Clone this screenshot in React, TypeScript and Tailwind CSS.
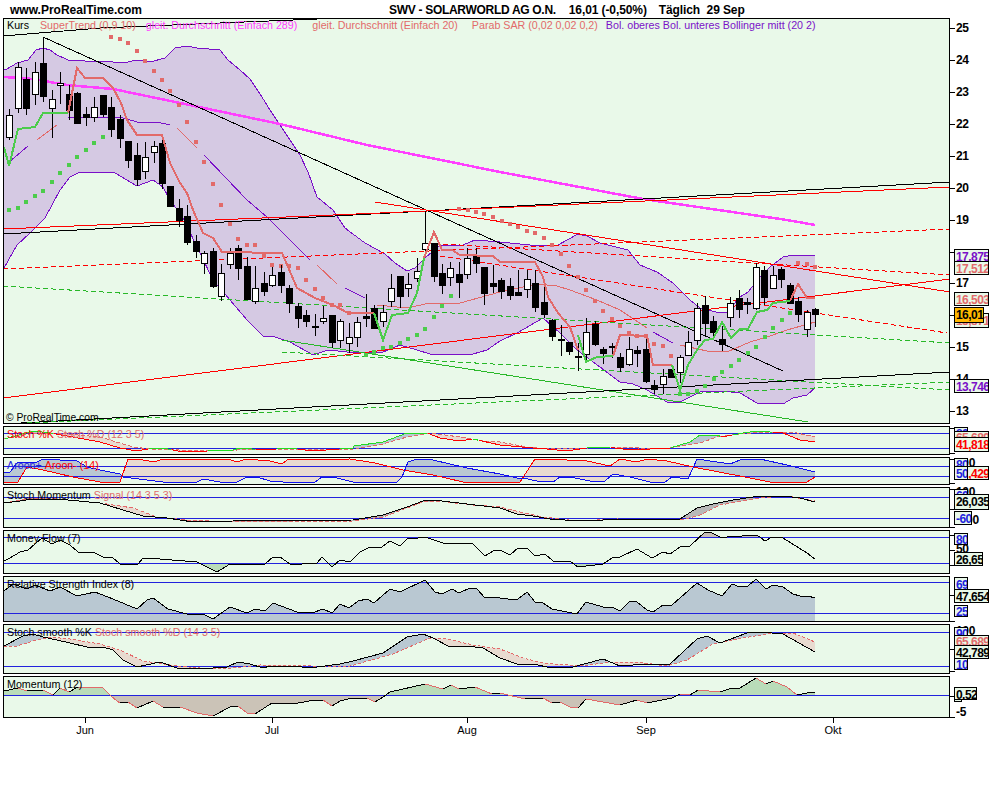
import React from 'react';

type P = [number, number];

const SALMON = '#e26a6a';
const PURPLE = '#7a10c8';
const GREEN = '#4ccc4c';
const BLUE = '#2222dd';
const ABOVE = '#b9c8d2';
const BELOW = '#e8dbd0';

const at = (s: P[], x: number) => {
  for (let i = 1; i < s.length; i++) {
    if (x <= s[i][0]) {
      const [x0, y0] = s[i - 1];
      const [x1, y1] = s[i];
      return x1 === x0 ? y1 : y0 + ((y1 - y0) * (x - x0)) / (x1 - x0);
    }
  }
  return s[s.length - 1][1];
};

// split the x range into runs where a is above b / below b
const runsOf = (a: P[], b: P[]) => {
  const x0 = Math.max(a[0][0], b[0][0]);
  const x1 = Math.min(a[a.length - 1][0], b[b.length - 1][0]);
  const runs: { up: boolean; xs: number[] }[] = [];
  for (let x = x0; x <= x1; x++) {
    const up = at(a, x) < at(b, x);
    if (!runs.length || runs[runs.length - 1].up !== up) runs.push({ up, xs: [] });
    runs[runs.length - 1].xs.push(x);
  }
  return runs;
};

const pts = (s: P[]) => s.map((p) => p.join(',')).join(' ');

const level = (y: number): P[] => [[4, y], [950, y]];

function Between({ a, b, up, down }: { a: P[]; b: P[]; up?: string; down?: string }) {
  return (
    <>
      {runsOf(a, b).map((r, i) => {
        const fill = r.up ? up : down;
        if (!fill) return null;
        const top = r.xs.map((x) => `${x},${at(a, x)}`);
        const bot = [...r.xs].reverse().map((x) => `${x},${at(b, x)}`);
        return <polygon key={i} points={[...top, ...bot].join(' ')} fill={fill} />;
      })}
    </>
  );
}

function Line({ s, c = '#000', w = 1, dash }: { s: P[]; c?: string; w?: number; dash?: string }) {
  return <polyline points={pts(s)} fill="none" stroke={c} strokeWidth={w} strokeDasharray={dash} />;
}

const candles: [number, number, number, number, number][] = [
  [109, 140, 115, 137, 1], [62, 113, 67, 108, 1], [68, 115, 79, 108, 0], [62, 105, 72, 94, 1], [37, 102, 63, 96, 0],
  [90, 138, 99, 108, 1], [72, 104, 83, 85, 1], [85, 120, 94, 110, 0], [92, 123, 93, 123, 0], [107, 126, 114, 117, 0],
  [97, 122, 107, 117, 1], [95, 117, 95, 114, 0], [97, 137, 107, 129, 0], [115, 148, 119, 138, 0], [141, 168, 141, 160, 0],
  [143, 186, 155, 179, 0], [142, 179, 157, 171, 1], [141, 163, 146, 152, 1], [140, 189, 143, 183, 0], [186, 206, 186, 206, 0],
  [199, 227, 208, 220, 0], [205, 245, 216, 242, 0], [235, 258, 241, 251, 0], [251, 274, 253, 263, 1], [248, 288, 251, 286, 0],
  [264, 301, 273, 296, 1], [248, 269, 253, 264, 1], [245, 280, 248, 268, 0], [257, 300, 266, 299, 0], [266, 304, 288, 301, 1],
  [272, 296, 283, 291, 0], [267, 287, 275, 285, 1], [265, 293, 272, 285, 0], [285, 313, 288, 303, 0], [303, 328, 306, 318, 0],
  [310, 327, 315, 321, 0], [314, 336, 326, 327, 0], [306, 324, 318, 321, 1], [315, 348, 315, 342, 0], [319, 348, 321, 340, 1],
  [323, 353, 337, 343, 1], [317, 347, 322, 337, 1], [294, 327, 316, 318, 0], [305, 329, 308, 328, 0], [305, 327, 312, 321, 1],
  [274, 307, 288, 301, 1], [276, 308, 276, 296, 0], [273, 297, 284, 288, 1], [258, 282, 271, 278, 1], [211, 255, 243, 249, 1],
  [243, 282, 243, 276, 0], [264, 294, 273, 285, 0], [262, 286, 268, 277, 1], [262, 298, 274, 282, 0], [248, 279, 258, 274, 1],
  [248, 273, 255, 263, 0], [267, 305, 267, 293, 0], [265, 293, 283, 286, 0], [278, 299, 280, 291, 0], [278, 300, 286, 295, 0],
  [270, 296, 292, 295, 0], [270, 298, 279, 289, 1], [270, 312, 283, 307, 0], [285, 318, 302, 314, 0], [319, 341, 320, 336, 0],
  [325, 356, 339, 339, 0], [342, 355, 342, 351, 0], [343, 371, 356, 357, 0], [318, 360, 332, 354, 1], [321, 346, 324, 344, 0],
  [347, 364, 349, 353, 0], [343, 358, 346, 346, 0], [353, 372, 357, 367, 0], [337, 366, 349, 364, 1], [346, 367, 350, 353, 0],
  [335, 383, 349, 381, 0], [380, 394, 385, 389, 0], [369, 394, 376, 384, 1], [369, 378, 369, 377, 0], [355, 383, 357, 372, 1],
  [331, 356, 342, 355, 1], [303, 345, 308, 340, 1], [296, 337, 305, 323, 0], [316, 338, 321, 332, 0], [326, 351, 339, 344, 0],
  [297, 327, 303, 317, 1], [290, 318, 298, 309, 0], [298, 314, 302, 304, 0], [263, 310, 267, 308, 1], [266, 305, 270, 297, 0],
  [266, 289, 275, 288, 1], [267, 288, 269, 279, 0], [283, 303, 285, 303, 0], [297, 322, 301, 314, 0], [310, 337, 312, 329, 1],
  [308, 327, 309, 314, 0],
];

const bandUp: P[] = [[4, 69], [7, 69], [17, 63], [28, 60], [36, 50], [43, 48], [50, 50], [57, 55], [68, 60], [85, 61], [100, 61], [125, 63], [135, 60], [150, 62], [165, 58], [175, 48], [187, 46], [197, 48], [220, 50], [228, 60], [240, 70], [250, 79], [262, 97], [270, 110], [280, 125], [290, 140], [300, 155], [308, 172], [317, 197], [333, 210], [345, 228], [365, 243], [385, 254], [395, 263], [407, 271], [415, 268], [425, 258], [440, 245], [463, 245], [475, 240], [500, 242], [530, 245], [550, 246], [558, 245], [578, 234], [587, 236], [600, 243], [628, 250], [640, 265], [657, 272], [673, 283], [690, 300], [700, 308], [720, 313], [727, 312], [740, 297], [748, 292], [760, 277], [770, 267], [783, 257], [793, 255], [815, 255]];
const bandLow: P[] = [[4, 268], [17, 245], [30, 233], [45, 218], [60, 190], [70, 177], [78, 173], [100, 172], [115, 173], [137, 186], [153, 180], [163, 187], [170, 200], [183, 218], [200, 253], [213, 280], [230, 300], [247, 320], [263, 336], [275, 337], [290, 342], [313, 355], [328, 350], [347, 352], [383, 352], [400, 345], [417, 350], [430, 354], [473, 354], [487, 350], [500, 341], [517, 333], [543, 318], [560, 333], [577, 350], [600, 367], [620, 382], [633, 384], [647, 390], [667, 402], [680, 402], [700, 392], [722, 391], [740, 393], [757, 403], [783, 404], [793, 398], [807, 395], [815, 388]];
const bandMid: P[][] = [
  [[8, 163], [28, 146]],
  [[37, 140], [57, 125]],
  [[68, 117], [107, 117], [120, 117], [137, 122], [157, 122], [170, 125]],
  [[177, 128], [197, 148]],
  [[204, 155], [247, 200], [267, 217], [310, 260]],
  [[317, 265], [337, 284]],
  [[345, 288], [365, 298]],
  [[377, 305], [407, 308], [430, 303], [460, 303], [500, 292], [537, 284], [557, 286], [570, 290], [597, 300], [620, 310], [647, 328]],
  [[653, 332], [673, 343]],
  [[680, 345], [707, 351], [727, 352], [750, 342], [767, 337], [787, 330], [815, 322]],
];
const trendRed: P[][] = [
  [[68, 113], [77, 68], [85, 78], [103, 78], [113, 88], [121, 103], [127, 120], [137, 135], [162, 135], [170, 163], [180, 183], [187, 193], [193, 210], [203, 233], [213, 238], [222, 252], [282, 253], [297, 288], [315, 298], [333, 305], [348, 313], [374, 313]],
  [[424, 258], [434, 232], [442, 250], [452, 250], [460, 255], [493, 256], [500, 262], [535, 262], [543, 277], [548, 297], [558, 313], [570, 327], [578, 350]],
  [[613, 356], [620, 335], [647, 336], [653, 365], [672, 365]],
  [[790, 301], [798, 284], [807, 298], [815, 298]],
];
const trendGreen: P[][] = [
  [[4, 147], [9, 166], [18, 129], [35, 127], [43, 113], [68, 113]],
  [[374, 313], [383, 340], [392, 315], [408, 313], [417, 293], [424, 258]],
  [[578, 335], [586, 362], [597, 357], [613, 356]],
  [[672, 365], [680, 390], [688, 365], [697, 350], [705, 340], [713, 339], [722, 322], [731, 338], [740, 329], [748, 329], [757, 312], [767, 310], [773, 303], [790, 301]],
];
const sarRed: P[] = [[111, 37], [120, 39], [128, 43], [137, 51], [145, 61], [154, 71], [162, 80], [170, 91], [179, 105], [187, 122], [196, 142], [204, 162], [213, 184], [221, 205], [230, 224], [238, 239], [247, 245], [255, 245], [264, 256], [272, 265], [281, 266], [289, 266], [298, 268], [306, 280], [315, 289], [323, 298], [332, 305], [340, 305], [349, 313], [459, 209], [468, 210], [476, 212], [484, 214], [493, 217], [502, 221], [510, 224], [518, 227], [527, 231], [535, 233], [544, 238], [552, 245], [561, 254], [569, 266], [578, 277], [586, 290], [595, 301], [603, 311], [612, 319], [620, 326], [629, 333], [637, 336], [646, 336], [654, 344], [663, 346], [671, 356], [798, 263], [807, 264], [815, 267]];
const sarGreen: P[] = [[9, 210], [18, 208], [26, 202], [35, 196], [43, 191], [52, 182], [60, 173], [69, 165], [77, 157], [86, 150], [94, 143], [103, 137], [366, 355], [374, 352], [383, 348], [391, 347], [400, 343], [408, 339], [417, 335], [425, 329], [434, 317], [442, 306], [451, 296], [680, 394], [688, 394], [697, 391], [705, 386], [714, 379], [722, 372], [731, 366], [739, 360], [748, 353], [756, 347], [765, 337], [773, 328], [782, 320], [790, 313]];

const stochK: P[] = [[4, 439], [15, 436], [33, 431], [50, 433], [73, 437], [100, 442], [120, 448], [137, 451], [153, 448], [163, 448], [183, 452], [207, 451], [233, 450], [240, 448], [263, 450], [290, 448], [313, 451], [353, 448], [354, 446], [383, 442], [407, 433], [427, 433], [440, 438], [460, 441], [473, 439], [500, 445], [533, 448], [547, 449], [567, 451], [593, 447], [607, 447], [623, 449], [650, 449], [670, 448], [690, 442], [700, 435], [717, 435], [722, 437], [743, 433], [757, 431], [783, 433], [800, 440], [815, 442]];
const stochD: P[] = [[4, 439], [20, 436], [33, 433], [67, 434], [100, 437], [133, 447], [150, 449], [207, 451], [267, 449], [353, 449], [383, 444], [407, 437], [430, 433], [460, 437], [483, 441], [500, 442], [527, 447], [550, 449], [627, 447], [650, 449], [670, 448], [700, 443], [717, 437], [740, 434], [767, 432], [797, 433], [815, 437]];
const aroonUp: P[] = [[4, 472], [10, 472], [17, 463], [37, 462], [43, 459], [77, 461], [87, 467], [100, 470], [120, 474], [123, 477], [147, 480], [163, 482], [197, 482], [203, 479], [220, 482], [237, 482], [247, 477], [257, 477], [270, 481], [283, 482], [315, 482], [322, 477], [333, 477], [353, 482], [397, 482], [402, 477], [408, 462], [417, 459], [433, 460], [467, 468], [500, 474], [517, 478], [523, 478], [537, 481], [553, 482], [560, 477], [570, 477], [590, 481], [605, 481], [613, 474], [630, 477], [650, 482], [665, 482], [672, 477], [688, 479], [697, 459], [717, 462], [730, 464], [740, 460], [760, 459], [787, 465], [815, 472]];
const aroonDown: P[] = [[4, 482], [18, 482], [27, 467], [43, 470], [73, 477], [100, 482], [120, 482], [128, 459], [143, 460], [155, 462], [162, 459], [227, 459], [238, 462], [245, 459], [270, 461], [282, 464], [287, 460], [350, 459], [375, 463], [403, 470], [433, 475], [463, 482], [520, 482], [535, 459], [567, 460], [587, 461], [610, 466], [620, 459], [637, 462], [647, 459], [667, 461], [693, 467], [745, 477], [770, 482], [807, 482], [815, 477]];
const smomK: P[] = [[4, 503], [20, 501], [33, 499], [57, 499], [100, 503], [123, 510], [143, 516], [167, 518], [193, 522], [233, 521], [353, 520], [383, 515], [407, 507], [423, 501], [433, 500], [467, 504], [500, 508], [517, 514], [533, 516], [550, 519], [580, 521], [627, 519], [680, 519], [697, 508], [713, 504], [733, 500], [753, 497], [783, 496], [800, 498], [815, 502]];
const smomS: P[] = [[4, 503], [33, 498], [57, 499], [100, 503], [133, 508], [157, 517], [187, 520], [233, 522], [353, 521], [383, 517], [423, 502], [437, 501], [473, 505], [500, 507], [520, 512], [543, 517], [577, 521], [617, 519], [682, 520], [700, 515], [720, 505], [760, 498], [787, 496], [815, 501]];
const money: P[] = [[4, 561], [10, 558], [20, 552], [28, 550], [42, 538], [52, 544], [60, 540], [70, 545], [78, 552], [93, 552], [105, 558], [112, 557], [120, 564], [138, 564], [143, 558], [160, 559], [197, 562], [217, 572], [230, 564], [265, 564], [273, 557], [280, 557], [290, 564], [302, 564], [317, 563], [322, 557], [332, 567], [340, 560], [350, 562], [360, 552], [370, 547], [382, 547], [390, 541], [400, 546], [408, 538], [418, 538], [425, 537], [443, 543], [473, 544], [485, 556], [493, 551], [500, 550], [510, 555], [518, 548], [527, 548], [535, 556], [545, 554], [553, 561], [570, 561], [578, 567], [603, 564], [612, 558], [620, 557], [637, 549], [652, 558], [663, 552], [670, 554], [680, 547], [690, 546], [705, 532], [712, 533], [720, 537], [727, 537], [757, 535], [765, 541], [772, 537], [783, 538], [807, 553], [815, 559]];
const rsi: P[] = [[4, 591], [13, 584], [27, 589], [35, 585], [50, 591], [60, 587], [77, 596], [95, 592], [113, 599], [137, 609], [147, 600], [153, 598], [168, 609], [187, 614], [203, 614], [213, 619], [230, 607], [247, 613], [255, 609], [265, 611], [273, 603], [297, 612], [312, 613], [323, 609], [332, 613], [340, 604], [349, 608], [358, 601], [367, 599], [374, 603], [390, 589], [400, 592], [425, 580], [435, 592], [442, 594], [452, 589], [459, 593], [470, 588], [477, 589], [485, 598], [493, 597], [500, 598], [508, 599], [518, 599], [527, 592], [535, 602], [543, 603], [552, 609], [577, 614], [586, 602], [603, 607], [612, 607], [620, 611], [630, 601], [637, 602], [647, 610], [653, 612], [663, 605], [672, 605], [697, 583], [708, 590], [722, 596], [732, 584], [740, 587], [748, 586], [756, 579], [766, 589], [773, 585], [783, 587], [793, 594], [800, 596], [808, 596], [815, 598]];
const smoothK: P[] = [[4, 646], [23, 636], [33, 634], [43, 637], [57, 640], [87, 647], [103, 647], [113, 650], [123, 660], [137, 667], [160, 662], [177, 668], [200, 669], [227, 667], [238, 662], [250, 664], [263, 668], [270, 666], [302, 667], [317, 667], [340, 664], [353, 661], [383, 653], [407, 637], [423, 634], [433, 638], [450, 647], [467, 646], [483, 648], [500, 658], [517, 664], [533, 664], [552, 668], [573, 667], [603, 659], [620, 666], [647, 664], [670, 664], [697, 639], [707, 636], [720, 643], [747, 633], [760, 632], [783, 634], [815, 652]];
const smoothD: P[] = [[4, 646], [17, 646], [33, 641], [50, 637], [70, 639], [100, 644], [120, 650], [143, 661], [177, 666], [200, 668], [233, 668], [260, 665], [313, 666], [350, 666], [393, 654], [430, 638], [447, 639], [473, 645], [500, 649], [523, 658], [543, 663], [580, 666], [613, 662], [637, 662], [667, 666], [687, 660], [713, 644], [743, 638], [773, 633], [793, 633], [815, 642]];
const momentum: P[] = [[4, 691], [18, 688], [27, 691], [43, 690], [53, 695], [60, 688], [69, 692], [78, 687], [103, 688], [112, 697], [120, 703], [128, 702], [137, 708], [153, 701], [163, 707], [180, 707], [197, 713], [213, 716], [230, 707], [238, 706], [247, 713], [255, 714], [272, 703], [298, 703], [315, 700], [323, 700], [332, 706], [340, 701], [348, 699], [367, 698], [375, 702], [383, 697], [390, 692], [425, 684], [443, 689], [451, 685], [459, 689], [475, 687], [492, 694], [500, 693], [525, 699], [543, 698], [552, 703], [560, 702], [570, 707], [578, 708], [586, 699], [603, 702], [620, 705], [637, 700], [647, 703], [672, 698], [680, 694], [690, 695], [698, 690], [720, 692], [732, 688], [740, 688], [756, 678], [766, 684], [773, 681], [787, 687], [797, 695], [807, 693], [815, 692]];

type Tag = { y: number; h?: number; w?: number; t: string; c?: string; plain?: boolean; x?: number; bg?: string };

function AxisTag({ tag, top }: { tag: Tag; top: number }) {
  const { y, h = 14, w = 35, t, c = '#000', plain, x = 954, bg = '#e9f9e9' } = tag;
  if (plain) {
    return (
      <span className="absolute text-[12px] leading-[12px] font-bold tracking-[-0.3px] whitespace-nowrap" style={{ left: x - 950, top: y - top - 6, color: c }}>
        {t}
      </span>
    );
  }
  return (
    <div
      className="absolute border border-black overflow-hidden text-[12px] leading-[12px] font-bold tracking-[-0.55px] whitespace-nowrap pl-px"
      style={{ left: x - 950, top: y - top, width: w, height: h, color: c, background: bg, paddingTop: h >= 13 ? 1 : 0 }}
    >
      {t}
    </div>
  );
}

function Panel({ top, h, ticks, tags, legend, children }: { top: number; h: number; ticks: number[]; tags: Tag[]; legend: React.ReactNode; children: React.ReactNode }) {
  return (
    <div className="flex" style={{ height: h }}>
      <div className="relative w-[947px] shrink-0 border border-black bg-[#e9f9e9] overflow-hidden">
        <svg className="absolute inset-0" width={945} height={h - 2} viewBox={`4 ${top + 1} 945 ${h - 2}`} shapeRendering="crispEdges">
          {children}
        </svg>
        <div className="absolute left-[3px] top-0 flex text-[10.7px] leading-[13px] whitespace-nowrap">{legend}</div>
      </div>
      <div className="relative w-[50px]">
        {ticks.map((y) => (
          <div key={y} className="absolute left-0 h-px w-[5px] bg-black" style={{ top: y - top }} />
        ))}
        {tags.map((tag, i) => (
          <AxisTag key={i} tag={tag} top={top} />
        ))}
      </div>
    </div>
  );
}

function MainChart() {
  return (
    <>
      <polygon points={pts([...bandUp, ...[...bandLow].reverse()])} fill="#d5c9e3" />
      <Line s={bandUp} c={PURPLE} />
      <Line s={bandLow} c={PURPLE} />
      {bandMid.map((s, i) => (
        <Line key={i} s={s} c={i % 2 ? SALMON : PURPLE} />
      ))}
      <Line s={[[4, 77], [33, 79], [67, 85], [113, 89], [180, 103], [280, 124], [367, 145], [500, 172], [643, 199], [787, 220], [815, 225]]} c="#ff40ff" w={2.5} />
      <Line s={[[3, 36], [100, 28], [317, 19]]} />
      <Line s={[[43, 37], [783, 371]]} />
      <Line s={[[3, 234], [427, 211], [950, 182]]} />
      <Line s={[[3, 229], [427, 211], [950, 187]]} c="#f00" />
      <Line s={[[375, 202], [950, 292]]} c="#f00" />
      <Line s={[[3, 398], [950, 279]]} c="#f00" />
      <Line s={[[3, 269], [950, 229]]} c="#f00" dash="5 3" />
      <Line s={[[427, 243], [950, 275]]} c="#f00" dash="5 3" />
      <Line s={[[440, 256], [947, 333]]} c="#f00" dash="5 3" />
      <Line s={[[3, 286], [950, 343]]} c="#28b828" dash="5 3" />
      <Line s={[[282, 352], [950, 390]]} c="#28b828" dash="5 3" />
      <Line s={[[282, 340], [808, 422]]} c="#28b828" />
      <Line s={[[3, 424], [950, 372]]} />
      <Line s={[[3, 424], [950, 382]]} c="#28b828" dash="5 3" />
      {sarRed.map(([x, y], i) => (
        <rect key={i} x={x - 2} y={y - 2} width={4} height={4} fill={SALMON} />
      ))}
      {sarGreen.map(([x, y], i) => (
        <rect key={i} x={x - 2} y={y - 2} width={4} height={4} fill={GREEN} />
      ))}
      {candles.map(([hi, lo, t, b, white], i) => {
        const x = Math.round(9.3 + 8.484 * i);
        return (
          <g key={i}>
            <line x1={x} x2={x} y1={hi} y2={lo} stroke="#000" />
            <rect x={x - 3} y={t} width={6} height={Math.max(b - t, 1)} fill={white ? '#fff' : '#000'} stroke="#000" />
          </g>
        );
      })}
      {trendRed.map((s, i) => (
        <Line key={i} s={s} c={SALMON} w={2} />
      ))}
      {trendGreen.map((s, i) => (
        <Line key={i} s={s} c={GREEN} w={2} />
      ))}
    </>
  );
}

function StochLine() {
  return (
    <>
      {runsOf(stochK, stochD).map((r, i) => (
        <polyline key={i} points={r.xs.map((x) => `${x},${at(stochK, x)}`).join(' ')} fill="none" stroke={r.up ? '#22dd22' : '#f00'} />
      ))}
    </>
  );
}

function MomentumLine() {
  return (
    <>
      {momentum.slice(1).map((p, i) => (
        <line key={i} x1={momentum[i][0]} y1={momentum[i][1]} x2={p[0]} y2={p[1]} stroke={p[1] > momentum[i][1] ? SALMON : '#000'} />
      ))}
    </>
  );
}

export default function App() {
  return (
    <div className="w-[1000px] h-[800px] bg-white text-black font-['Liberation_Sans',Arial,sans-serif] overflow-hidden">
      <div className="flex h-[18px] pt-[2px] items-center text-[12px] font-bold whitespace-pre">
        <span className="ml-[10px] w-[379px]">www.ProRealTime.com</span>
        <span className="tracking-[-0.3px]">SWV - SOLARWORLD AG O.N.</span>
        <span className="ml-[13px] tracking-[-0.1px]">16,01 (-0,50%)</span>
        <span className="ml-[12px] tracking-[-0.1px]">Täglich  29 Sep</span>
      </div>
      <div className="ml-[3px] flex flex-col gap-[2px]">
        <Panel
          top={18}
          h={406}
          ticks={[28, 60, 92, 124, 156, 188, 220, 252, 283, 315, 347, 379, 411]}
          tags={[
            { y: 28, t: '25', plain: true, x: 956 },
            { y: 60, t: '24', plain: true, x: 956 },
            { y: 92, t: '23', plain: true, x: 956 },
            { y: 124, t: '22', plain: true, x: 956 },
            { y: 156, t: '21', plain: true, x: 956 },
            { y: 188, t: '20', plain: true, x: 956 },
            { y: 220, t: '19', plain: true, x: 956 },
            { y: 283, t: '17', plain: true, x: 956 },
            { y: 347, t: '15', plain: true, x: 956 },
            { y: 379, t: '14', plain: true, x: 956 },
            { y: 411, t: '13', plain: true, x: 956 },
            { y: 249, h: 13, t: '17,875', c: PURPLE },
            { y: 261, t: '17,512', c: SALMON },
            { y: 292, t: '16,503', c: SALMON },
            { y: 313, h: 15, t: '15,871', c: SALMON },
            { y: 307, h: 16, w: 30, t: '16,01', bg: '#ffb800' },
            { y: 379, t: '13,746', c: PURPLE },
          ]}
          legend={
            <>
              <span>Kurs</span>
              <span className="ml-[11px] text-[#e26a6a]">SuperTrend (0,9 10)</span>
              <span className="ml-[10px] text-[#ff40ff]">gleit. Durchschnitt (Einfach 289)</span>
              <span className="ml-[15px] text-[#e26a6a]">gleit. Durchschnitt (Einfach 20)</span>
              <span className="ml-[14px] text-[#e26a6a]">Parab SAR (0,02 0,02 0,2)</span>
              <span className="ml-[8px] text-[#7a10c8]">Bol. oberes Bol. unteres Bollinger mitt (20 2)</span>
              <span className="absolute left-[-1px] top-[392px] text-[10.3px]">© ProRealTime.com</span>
            </>
          }
        >
          <MainChart />
        </Panel>

        <Panel
          top={426}
          h={29}
          ticks={[428, 453]}
          tags={[
            { y: 427, h: 12, w: 14, t: '80', c: BLUE },
            { y: 431, h: 8, t: '65,689', c: SALMON },
            { y: 437, h: 15, t: '41,818', c: '#f00' },
          ]}
          legend={
            <>
              <span className="mt-px text-[#f00]">Stoch %K</span>
              <span className="ml-[3px] mt-px text-[#e26a6a]">Stoch %D (12 3 5)</span>
            </>
          }
        >
          <Between a={stochK} b={stochD} up={ABOVE} down={BELOW} />
          <Line s={level(433)} c={BLUE} />
          <Line s={level(448)} c={BLUE} />
          <Line s={stochD} c={SALMON} dash="4 2" />
          <StochLine />
        </Panel>

        <Panel
          top={457}
          h={28}
          ticks={[459, 483]}
          tags={[
            { y: 463, t: '100', plain: true, x: 956 },
            { y: 458, h: 10, w: 14, t: '80', c: BLUE },
            { y: 466, h: 14, t: '12,429', c: '#f00' },
            { y: 466, h: 14, w: 14, t: '50', c: BLUE },
          ]}
          legend={
            <>
              <span className="mt-px text-[#2222dd]">Aroon+</span>
              <span className="ml-[3px] mt-px text-[#f00]">Aroon- (14)</span>
            </>
          }
        >
          <Between a={aroonUp} b={aroonDown} up={ABOVE} down={BELOW} />
          <Line s={level(466)} c={BLUE} />
          <Line s={level(476)} c={BLUE} />
          <Line s={aroonDown} c="#f00" />
          <Line s={aroonUp} c="#1111ee" />
        </Panel>

        <Panel
          top={487}
          h={41}
          ticks={[489, 509, 527]}
          tags={[
            { y: 492, t: '100', plain: true, x: 956 },
            { y: 489, h: 8, w: 14, t: '60', c: BLUE },
            { y: 520, t: '-100', plain: true, x: 956 },
            { y: 494, h: 16, t: '26,035' },
            { y: 511, h: 14, w: 18, t: '-60', c: BLUE },
          ]}
          legend={
            <>
              <span className="mt-[1px]">Stoch Momentum</span>
              <span className="ml-[3px] mt-[1px] text-[#e26a6a]">Signal (14 3 5 3)</span>
            </>
          }
        >
          <Between a={smomK} b={smomS} up="#b8b8b8" down={BELOW} />
          <Line s={level(497)} c={BLUE} />
          <Line s={level(518)} c={BLUE} />
          <Line s={smomS} c={SALMON} dash="4 2" />
          <Line s={smomK} />
        </Panel>

        <Panel
          top={530}
          h={44}
          ticks={[535, 550, 565]}
          tags={[
            { y: 549, t: '50', plain: true, x: 956 },
            { y: 533, h: 12, w: 14, t: '80', c: BLUE },
            { y: 552, w: 29, t: '26,65' },
          ]}
          legend={<span className="mt-[1px]">Money Flow (7)</span>}
        >
          <Between a={money} b={level(537)} up="#c8bfb8" />
          <Between a={level(563)} b={money} up="#b9dcb9" />
          <Line s={level(537)} c={BLUE} />
          <Line s={level(563)} c={BLUE} />
          <Line s={money} />
        </Panel>

        <Panel
          top={576}
          h={46}
          ticks={[595, 621]}
          tags={[
            { y: 577, h: 13, w: 14, t: '69', c: BLUE },
            { y: 589, t: '47,654' },
            { y: 605, h: 12, w: 14, t: '25', c: BLUE },
          ]}
          legend={<span className="mt-[1px]">Relative Strength Index (8)</span>}
        >
          <polygon points={pts([...rsi, [815, 622], [4, 622]])} fill="#b9c8d2" />
          <Line s={level(582)} c={BLUE} />
          <Line s={level(613)} c={BLUE} />
          <Line s={rsi} />
        </Panel>

        <Panel
          top={624}
          h={50}
          ticks={[649, 671]}
          tags={[
            { y: 631, t: '100', plain: true, x: 956 },
            { y: 627, h: 12, w: 14, t: '90', c: BLUE },
            { y: 657, h: 13, w: 14, t: '10', c: BLUE },
            { y: 635, h: 11, t: '65,689', c: SALMON },
            { y: 645, t: '42,789' },
          ]}
          legend={
            <>
              <span className="mt-[1px]">Stoch smooth %K</span>
              <span className="ml-[3px] mt-[1px] text-[#e26a6a]">Stoch smooth %D (14 3 5)</span>
            </>
          }
        >
          <Between a={smoothK} b={smoothD} up={ABOVE} down={BELOW} />
          <Line s={level(632)} c={BLUE} />
          <Line s={level(666)} c={BLUE} />
          <Line s={smoothD} c={SALMON} dash="3 2" />
          <Line s={smoothK} />
        </Panel>

        <Panel
          top={676}
          h={42}
          ticks={[696, 717]}
          tags={[
            { y: 712, t: '-5', plain: true, x: 956 },
            { y: 690, h: 12, w: 8, t: '' },
            { y: 687, h: 13, w: 23, t: '0,52' },
          ]}
          legend={<span className="mt-[1px]">Momentum (12)</span>}
        >
          <Between a={momentum} b={level(695)} up="#b9dcb9" down="#cbc3b7" />
          <Line s={level(695)} c={BLUE} />
          <MomentumLine />
        </Panel>
      </div>

      {/* month axis */}
      <div className="flex text-[11px] leading-[13px]">
        {[
          { w: 'w-[187px] ml-[85px]', t: 'Jun' },
          { w: 'w-[195px]', t: 'Jul' },
          { w: 'w-[179px]', t: 'Aug' },
          { w: 'w-[187px]', t: 'Sep' },
          { w: 'w-[60px]', t: 'Okt' },
        ].map((m) => (
          <div key={m.t} className={m.w}>
            <div className="h-[5px] w-px bg-black" />
            <div className="mt-[1px] inline-block -translate-x-1/2">{m.t}</div>
          </div>
        ))}
      </div>
    </div>
  );
}
